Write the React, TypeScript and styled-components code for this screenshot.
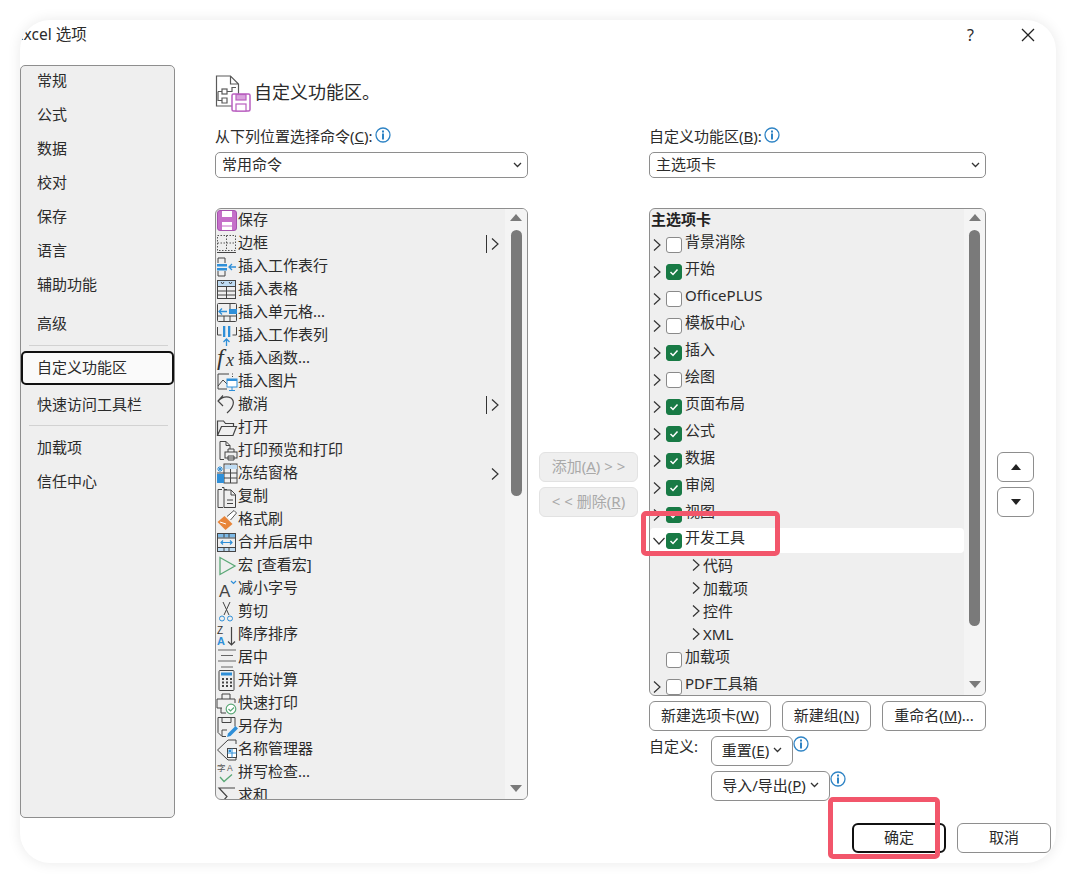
import React from "react";
import styled, { createGlobalStyle } from "styled-components";

const Global = createGlobalStyle`
  html, body { margin: 0; padding: 0; background: #fff; }
  body { font-family: "Noto Sans", "Noto Sans CJK SC", sans-serif; color: #2b2b2b; font-size: 15px; }
`;

const Dialog = styled.div`
  position: relative; width: 1036px; height: 843px; margin: 20px; background: #fff;
  border-radius: 30px; overflow: hidden; box-shadow: 0 0 14px rgba(0,0,0,.09);
  display: flex; flex-direction: column;
`;
const TitleBar = styled.div`
  height: 45px; flex: none; display: flex; align-items: flex-start; justify-content: space-between;
`;
const TitleText = styled.div`
  font-size: 15.5px; line-height: 28px; margin-left: -5px; white-space: nowrap;
`;
const TitleActions = styled.div`
  display: flex; align-items: flex-start; padding-right: 20px; gap: 46px;
`;
const HelpMark = styled.span`font-size: 16px; line-height: 30px;`;
const CloseBtn = styled.svg`width: 16px; height: 16px; margin-top: 7px; stroke: #222; stroke-width: 1.3; fill: none;`;

const Body = styled.div`display: flex; height: 753px; flex: none;`;
const Sidebar = styled.nav`
  width: 155px; flex: none; box-sizing: border-box; height: 753px; background: #efefef;
  border: 1px solid #8e8e8e; border-radius: 5px; overflow: hidden;
`;
const NavList = styled.div`display: flex; flex-direction: column; margin-top: -4px;`;
const NavItem = styled.div<{ $h?: number; $active?: boolean; $lift?: number }>`
  height: ${p => p.$h ?? 34}px; flex: none; box-sizing: border-box; padding-left: 16px; padding-bottom: ${p => p.$lift ?? 0}px;
  display: flex; align-items: center; white-space: nowrap;
  ${p => p.$active ? `height: 34px; border: 2px solid #111; border-radius: 5px; background: #fafafa; padding-left: 14px; padding-bottom: 4px;` : ""}
`;
const NavRule = styled.div`height: 1px; background: #d2d2d2; margin: 0 6px 0 8px; flex: none;`;

const Main = styled.div`flex: 1; padding-left: 40px; display: flex; flex-direction: column; min-width: 0;`;
const Header = styled.div`display: flex; align-items: center; gap: 3px; height: 36px; margin-top: 10px; flex: none;`;
const HeaderTitle = styled.div`font-size: 18px; margin-top: -4px;`;
const Columns = styled.div`display: flex; margin-top: 15px; align-items: flex-start;`;
const Column = styled.div<{ $w: number }>`width: ${p => p.$w}px; flex: none; display: flex; flex-direction: column;`;
const MidColumn = styled.div`width: 121px; flex: none; display: flex; flex-direction: column; align-items: center; padding-top: 326px; gap: 5px;`;
const SideColumn = styled.div`width: 37px; margin-left: 11px; flex: none; display: flex; flex-direction: column; padding-top: 326px; gap: 5px;`;
const LabelRow = styled.div`display: flex; align-items: center; height: 21px; gap: 2px; white-space: nowrap;`;
const LabelText = styled.span`margin-top: -2px;`;
const Select = styled.div`
  height: 26px; box-sizing: border-box; margin-top: 5px; border: 1px solid #8e8e8e; border-radius: 5px;
  display: flex; align-items: center; justify-content: space-between; padding: 0 5px 0 6px; background: #fff;
`;
const SelectText = styled.span`margin-top: -4px;`;
const ListBox = styled.div<{ $h: number }>`
  margin-top: 30px; height: ${p => p.$h}px; box-sizing: border-box; border: 1px solid #8e8e8e; border-radius: 6px;
  background: #efefef; display: flex; overflow: hidden;
`;
const ListContent = styled.div`flex: 1; min-width: 0; overflow: hidden;`;
const Track = styled.div<{ $w: number }>`
  width: ${p => p.$w}px; flex: none; background: #f4f4f4; display: flex; flex-direction: column; align-items: center;
`;
const ThumbArea = styled.div`flex: 1; align-self: stretch; display: flex; flex-direction: column; align-items: center;`;
const Thumb = styled.div<{ $h: number }>`width: 11px; height: ${p => p.$h}px; background: #7a7a7a; border-radius: 6px;`;
const Arrow = styled.svg`width: 12px; height: 21px; fill: #7a7a7a; flex: none;`;

const CmdRow = styled.div`
  height: 23px; display: flex; align-items: center; white-space: nowrap;
`;
const CmdLabel = styled.span`line-height: 20px; margin-top: -4px;`;
const CmdEnd = styled.span`margin-left: auto; margin-right: 6px; display: flex; align-items: center; gap: 4px;`;
const SubBar = styled.span`display: inline-block; width: 1px; height: 18px; background: #333;`;

const RootHead = styled.div`height: 22px; font-weight: 700; padding-left: 1px; line-height: 20px; color: #222;`;
const TabRow = styled.div<{ $sel?: boolean; $gap?: number }>`
  height: ${p => p.$sel ? 25 : 27}px; display: flex; align-items: center; padding-left: 3px; white-space: nowrap;
  margin-top: ${p => p.$gap ?? 0}px;
  ${p => p.$sel ? "background:#fff;border-radius:4px;" : ""}
`;
const TabChevronSlot = styled.span`width: 13px; flex: none; display: flex; align-items: center;`;
const Check = styled.span<{ $on: boolean }>`
  width: 16px; height: 16px; box-sizing: border-box; border-radius: 3px; flex: none; display: flex; align-items: center; justify-content: center;
  background: ${p => p.$on ? "#187a45" : "#fff"}; border: 1px solid ${p => p.$on ? "#187a45" : "#8a8a8a"};
`;
const TabLabel = styled.span`margin-left: 3px; line-height: 20px; margin-bottom: 7px;`;
const GroupRow = styled.div`height: 23px; display: flex; align-items: center; padding-left: 42px; gap: 3px; white-space: nowrap;`;

const Btn = styled.button<{ $w?: number; $off?: boolean; $strong?: boolean }>`
  width: ${p => p.$w}px; height: 30px; box-sizing: border-box; padding: 0 0 3px; flex: none;
  font: inherit; font-size: 15px; color: ${p => p.$off ? "#a9a9a9" : "#2b2b2b"};
  background: ${p => p.$off ? "#efefef" : "#fff"};
  border-style: solid; border-width: ${p => p.$strong ? 2 : 1}px;
  border-color: ${p => p.$strong ? "#111" : p.$off ? "#e2e2e2" : "#8e8e8e"};
  border-radius: 6px; display: flex; align-items: center; justify-content: center; gap: 4px; white-space: nowrap;
`;
const ButtonRow = styled.div`display: flex; justify-content: space-between; margin-top: 5px;`;
const CustomRow = styled.div`display: flex; margin-top: 5px;`;
const CustomLabel = styled.div`width: 62px; flex: none; line-height: 20px;`;
const CustomStack = styled.div`display: flex; flex-direction: column; gap: 5px;`;
const CustomLine = styled.div`display: flex; align-items: flex-start;`;
const Footer = styled.div`display: flex; justify-content: flex-end; gap: 11px; padding-right: 5px; margin-top: 5px;`;

const Info = styled.svg<{ $shift?: number }>`width: 16px; height: 16px; flex: none; margin-top: ${p => p.$shift ?? 0}px;`;

const Highlight = styled.div<{ $x: number; $y: number; $w: number; $h: number }>`
  position: absolute; left: ${p => p.$x}px; top: ${p => p.$y}px; width: ${p => p.$w}px; height: ${p => p.$h}px;
  box-sizing: border-box; border: 5px solid #f2566b; border-radius: 5px; pointer-events: none;
`;
const Ico = styled.svg`width: 22px; height: 22px; flex: none; overflow: visible; fill: none; stroke: #555; stroke-width: 1;`;
const BigIco = styled.svg`width: 36px; height: 37px; flex: none; fill: none; stroke: #5a5a5a; stroke-width: 1.2;`;
const ChevSvg = styled.svg`width: 8px; height: 12px; fill: none; stroke: #333; stroke-width: 1.2; flex: none;`;
const DownSvg = styled.svg`width: 12px; height: 8px; fill: none; stroke: #333; stroke-width: 1.2; flex: none;`;
const TinyDown = styled.svg`width: 9px; height: 6px; fill: none; stroke: #333; stroke-width: 1.3; flex: none;`;
const TriSvg = styled.svg`width: 10px; height: 6px; fill: #222; flex: none; margin-top: 3px;`;

const B = "#2f8fd8", P = "#c56fc9", G = "#5aa876", O = "#e8853a";

const ICONS: React.ReactNode[] = [
  <><rect x="1.5" y="0.5" width="19" height="20" rx="2.5" fill={P} stroke="#a652ae"/><rect x="6" y="1" width="10" height="6" fill="#fff" stroke="none"/><rect x="6" y="12" width="10" height="8" fill="#fff" stroke="none"/><path d="M6 16h10" stroke={P}/></>,
  <><path d="M1.5 2.5h18v15h-18zM10.5 2.5v15M1.5 10h18" strokeDasharray="1.5 1.5"/><path d="M1 19.5h19" stroke="#444"/></>,
  <><path d="M2 7V2h7v5M2 15v5h7v-5" stroke="#444"/><rect x="1" y="8" width="10" height="2.5" fill={B} stroke="none"/><rect x="1" y="12" width="10" height="2.5" fill={B} stroke="none"/><path d="M20 11h-7M16 8l-3 3 3 3" stroke={B} strokeWidth="1.3"/></>,
  <><rect x="1.5" y="1.5" width="18" height="18" stroke="#444"/><rect x="2" y="2" width="17" height="5" fill="#bfdcf3" stroke="none"/><path d="M1.5 7.5h18M1.5 12h18M1.5 16h18M10.5 7.5v12M5 3l1.5 2L8 3M13 3l1.5 2L16 3" stroke="#444"/></>,
  <><rect x="1.5" y="1.5" width="19" height="18" rx="1" stroke="#444"/><path d="M1.5 14h19M8 14v5.5M14 14v5.5M14 1.5v6" stroke="#444"/><rect x="13" y="7" width="8" height="5" fill={B} stroke="none"/><path d="M11 9.5H3M6 6.5l-3 3 3 3" stroke={B} strokeWidth="1.3"/></>,
  <><path d="M1.5 2v8h4M20.5 2v8h-4" stroke="#444"/><rect x="7" y="1" width="2.3" height="11" fill={B} stroke="none"/><rect x="12" y="1" width="2.3" height="11" fill={B} stroke="none"/><path d="M10.5 21v-7M7.5 17l3-3 3 3" stroke={B} strokeWidth="1.3"/></>,
  <><text x="1" y="17" fontFamily="Liberation Serif, serif" fontStyle="italic" fontSize="24" fill="#333" stroke="none">f</text><text x="10" y="18" fontFamily="Liberation Serif, serif" fontStyle="italic" fontSize="18" fill="#333" stroke="none">x</text></>,
  <><path d="M13 3H2v15h9M2 15l5-6 4 4" stroke="#444"/><rect x="11" y="8" width="10" height="8" fill="#fff" stroke={B}/><path d="M13 19.5h6M16 16v3.5" stroke={B}/><rect x="11" y="8" width="10" height="2" fill={B} stroke="none"/><path d="M16 3h1M16 5.5h1" stroke="#444"/></>,
  <><path d="M7 1.5L2 7l5 5M2 7c4-4 9-5 13-3 4 3 3 9-4 15" stroke="#444" strokeWidth="1.2"/></>,
  <><path d="M1.5 18.5V4h6l2 2.5h8v3M1.5 18.5l4-9h15l-3.5 9z" stroke="#444" strokeWidth="1.2"/></>,
  <><path d="M14 9V5.5L10 1.5H4v18h4" stroke="#444"/><path d="M10 1.5V5.5h4" stroke="#444"/><rect x="9" y="12" width="12" height="6" stroke="#444"/><path d="M12 12V9h6v3M12 16h6v4h-6z" stroke="#444"/></>,
  <><path d="M1 6h6M4 3v6M2 4l4 4M6 4L2 8" stroke={B}/><rect x="8" y="1" width="13" height="19" stroke="#444"/><path d="M1 10h20M14.5 1v19M8 15h13" stroke="#444"/><rect x="1" y="11" width="7" height="9" fill={B} stroke="none"/><rect x="9" y="2" width="12" height="4" fill="#bfdcf3" stroke="none"/></>,
  <><path d="M6 3.5H2v18h5M11 3.5H8V1.5h-2" stroke="#444"/><path d="M8 4h7l4.5 4.5V21.5H8zM15 4v5h4.5M11 14h6M11 17.5h6" stroke="#444"/></>,
  <><path d="M1.5 13l8 8 7-6-8-8z" fill={O} stroke="none"/><path d="M4 13l6 2" stroke="#fff"/><path d="M11 7.5l7-6 2.5 2.5-6 7" fill="#fff" stroke="#555"/></>,
  <><rect x="1.5" y="1.5" width="18" height="18" stroke="#444"/><rect x="2" y="2" width="17" height="3.5" fill="#7db9e6" stroke="none"/><rect x="2" y="16" width="17" height="3" fill="#bfdcf3" stroke="none"/><path d="M1.5 6h18M1.5 15.5h18M8 1.5v4M13 1.5v4M8 15.5v4M13 15.5v4" stroke="#444"/><path d="M5 10.5h11M7 8.5l-2 2 2 2M14 8.5l2 2-2 2" stroke={B} strokeWidth="1.2"/></>,
  <><path d="M4 2.5v17l15-8.5z" stroke={G} strokeWidth="1.3"/></>,
  <><text x="3" y="19" fontFamily="Liberation Sans, sans-serif" fontSize="17" fill="#444" stroke="none">A</text><path d="M15 3l2.5 2.5L20 3" stroke={B} strokeWidth="1.2"/></>,
  <><path d="M7 1l6 13M14 1L8 14" stroke="#444"/><circle cx="6" cy="17.5" r="2.5" stroke={B}/><circle cx="14" cy="17.5" r="2.5" stroke={B}/></>,
  <><text x="1" y="10" fontFamily="Liberation Sans, sans-serif" fontSize="10" fill="#333" stroke="none">Z</text><text x="1" y="21" fontFamily="Liberation Sans, sans-serif" fontSize="11" fontWeight="700" fill={B} stroke="none">A</text><path d="M15.5 3v18M12 17.5l3.5 3.5 3.5-3.5" stroke="#444" strokeWidth="1.2"/></>,
  <><path d="M2 3h18M5 8.5h12M2 14h18M5 20h12" stroke="#666" strokeWidth="1.2"/></>,
  <><rect x="3" y="0.5" width="15" height="20" rx="1" stroke="#444"/><rect x="5" y="2.5" width="11" height="3" fill={B} stroke="none"/><path d="M6 9h2M10 9h2M14 9h2M6 12.5h2M10 12.5h2M14 12.5h2M6 16h2M10 16h2M14 16h2" stroke="#444" strokeWidth="1.8"/></>,
  <><path d="M6 6V1h8v5M6 15H1V6h18v4M5 15v5h5" stroke="#444"/><circle cx="15" cy="16" r="4.8" fill="#fff" stroke={G} strokeWidth="1.2"/><path d="M12.5 16l2 2 3.5-3.5" stroke={G} strokeWidth="1.2"/></>,
  <><path d="M2 1.5h17v9M2 1.5v15l4 4h4M6 1.5v5h9v-5M6 20v-6h5" stroke="#444"/><path d="M11 21l1-3.5 7.5-7.5 2.5 2.5-7.5 7.5z" fill={B} stroke="none"/></>,
  <><path d="M20 5V1h-8L1.5 11 12 21h8V9" stroke="#444"/><rect x="11.5" y="9.5" width="9" height="9" fill="#fff" stroke="#444"/><path d="M11.5 14h9M16 9.5v9" stroke={B}/><rect x="12.5" y="10.5" width="2.5" height="2.5" fill={B} stroke="none"/></>,
  <><text x="1" y="9" fontFamily="Noto Sans CJK SC, sans-serif" fontSize="8.5" fill="#555" stroke="none">字</text><text x="11" y="8.5" fontFamily="Liberation Sans, sans-serif" fontSize="8.5" fill="#555" stroke="none">A</text><path d="M4 15l4 4.5 8-7" stroke={G} strokeWidth="1.3"/></>,
  <><path d="M19 3H3l8 8.5L3 20.5h16" stroke="#444" strokeWidth="1.2"/></>,
];

const commands: [string, ("bar" | "plain")?][] = [
  ["保存"], ["边框", "bar"], ["插入工作表行"], ["插入表格"], ["插入单元格..."], ["插入工作表列"], ["插入函数..."],
  ["插入图片"], ["撤消", "bar"], ["打开"], ["打印预览和打印"], ["冻结窗格", "plain"], ["复制"], ["格式刷"],
  ["合并后居中"], ["宏 [查看宏]"], ["减小字号"], ["剪切"], ["降序排序"], ["居中"], ["开始计算"], ["快速打印"],
  ["另存为"], ["名称管理器"], ["拼写检查..."], ["求和"],
];

const tabs: [string, boolean][] = [
  ["背景消除", false], ["开始", true], ["OfficePLUS", false], ["模板中心", false], ["插入", true], ["绘图", false],
  ["页面布局", true], ["公式", true], ["数据", true], ["审阅", true], ["视图", true],
];

const Chev = () => <ChevSvg viewBox="0 0 8 12"><path d="M1 0.5L7 6 1 11.5" /></ChevSvg>;
const Down = () => <DownSvg viewBox="0 0 12 8"><path d="M0.5 1L6 7l5.5-6" /></DownSvg>;
const SmallDown = () => <TinyDown viewBox="0 0 9 6"><path d="M1 1l3.5 3.5L8 1" /></TinyDown>;
const InfoIcon = ({ shift }: { shift?: number }) => (
  <Info $shift={shift} viewBox="0 0 16 16">
    <circle cx="8" cy="8" r="7" fill="#fff" stroke="#2f84c5" strokeWidth="1.3" />
    <rect x="7" y="3.5" width="2" height="2" fill="#2f84c5" />
    <rect x="7" y="6.5" width="2" height="6" fill="#2f84c5" />
  </Info>
);
const Tick = () => (
  <svg width="10" height="8" viewBox="0 0 10 8" fill="none" stroke="#fff" strokeWidth="1.5"><path d="M1.5 4l2.5 2.5 4.5-5" /></svg>
);
const Scroll = ({ w, thumb }: { w: number; thumb: number }) => (
  <Track $w={w}>
    <Arrow viewBox="0 0 12 21"><path d="M6 5l6 7H0z" /></Arrow>
    <ThumbArea><Thumb $h={thumb} /></ThumbArea>
    <Arrow viewBox="0 0 12 21"><path d="M0 7h12l-6 7z" /></Arrow>
  </Track>
);

export default function App() {
  return (
    <>
      <Global />
      <Dialog>
        <TitleBar>
          <TitleText>Excel 选项</TitleText>
          <TitleActions>
            <HelpMark>?</HelpMark>
            <CloseBtn viewBox="0 0 16 16"><path d="M2 2l12 12M14 2L2 14" /></CloseBtn>
          </TitleActions>
        </TitleBar>
        <Body>
          <Sidebar>
            <NavList>
              {["常规", "公式", "数据", "校对", "保存", "语言", "辅助功能"].map(t => <NavItem key={t}>{t}</NavItem>)}
              <NavItem $h={45}>高级</NavItem>
              <NavRule />
              <NavItem $h={5} />
              <NavItem $active>自定义功能区</NavItem>
              <NavItem $h={40} $lift={4}>快速访问工具栏</NavItem>
              <NavRule />
              <NavItem $h={3} />
              <NavItem>加载项</NavItem>
              <NavItem>信任中心</NavItem>
            </NavList>
          </Sidebar>
          <Main>
            <Header>
              <BigIco viewBox="0 0 36 37">
                <path d="M17 31H1.5V1h14l8 8v10M15.5 1v8h8" />
                <rect x="7" y="14" width="5" height="5" />
                <path d="M12 16.5h5v-4h4M3 16.5h4M3 16.5v9h4M7 23h5v5H7z" />
                <rect x="17" y="19" width="18" height="17" rx="1.5" stroke="#b95fc0" strokeWidth="1.5" fill="#fff" />
                <rect x="21" y="19.5" width="10" height="5.5" fill="#d9a3dd" stroke="#b95fc0" />
                <rect x="21" y="29" width="10" height="7" fill="#fff" stroke="#b95fc0" />
              </BigIco>
              <HeaderTitle>自定义功能区。</HeaderTitle>
            </Header>
            <Columns>
              <Column $w={313}>
                <LabelRow><LabelText>从下列位置选择命令(<u>C</u>):</LabelText><InfoIcon shift={-3} /></LabelRow>
                <Select><SelectText>常用命令</SelectText><SmallDown /></Select>
                <ListBox $h={592}>
                  <ListContent>
                    {commands.map(([label, end], i) => (
                      <CmdRow key={label}>
                        <Ico viewBox="0 0 22 22">{ICONS[i]}</Ico>
                        <CmdLabel>{label}</CmdLabel>
                        {end && <CmdEnd>{end === "bar" && <SubBar />}<Chev /></CmdEnd>}
                      </CmdRow>
                    ))}
                  </ListContent>
                  <Scroll w={22} thumb={266} />
                </ListBox>
              </Column>
              <MidColumn>
                <Btn $w={99} $off><span>添加(<u>A</u>) &gt; &gt;</span></Btn>
                <Btn $w={99} $off><span>&lt; &lt; 删除(<u>R</u>)</span></Btn>
              </MidColumn>
              <Column $w={337}>
                <LabelRow><LabelText>自定义功能区(<u>B</u>):</LabelText><InfoIcon shift={-3} /></LabelRow>
                <Select><SelectText>主选项卡</SelectText><SmallDown /></Select>
                <ListBox $h={488}>
                  <ListContent>
                    <RootHead>主选项卡</RootHead>
                    {tabs.map(([label, on]) => (
                      <TabRow key={label}>
                        <TabChevronSlot><Chev /></TabChevronSlot>
                        <Check $on={on}>{on && <Tick />}</Check>
                        <TabLabel>{label}</TabLabel>
                      </TabRow>
                    ))}
                    <TabRow $sel>
                      <TabChevronSlot><Down /></TabChevronSlot>
                      <Check $on><Tick /></Check>
                      <TabLabel>开发工具</TabLabel>
                    </TabRow>
                    {["代码", "加载项", "控件", "XML"].map(t => <GroupRow key={t}><Chev />{t}</GroupRow>)}
                    <TabRow $gap={1}>
                      <TabChevronSlot />
                      <Check $on={false} />
                      <TabLabel>加载项</TabLabel>
                    </TabRow>
                    <TabRow>
                      <TabChevronSlot><Chev /></TabChevronSlot>
                      <Check $on={false} />
                      <TabLabel>PDF工具箱</TabLabel>
                    </TabRow>
                  </ListContent>
                  <Scroll w={21} thumb={396} />
                </ListBox>
                <ButtonRow>
                  <Btn $w={122}><span>新建选项卡(<u>W</u>)</span></Btn>
                  <Btn $w={89}><span>新建组(<u>N</u>)</span></Btn>
                  <Btn $w={104}><span>重命名(<u>M</u>)...</span></Btn>
                </ButtonRow>
                <CustomRow>
                  <CustomLabel>自定义:</CustomLabel>
                  <CustomStack>
                    <CustomLine>
                      <Btn $w={82}><span>重置(<u>E</u>)</span><SmallDown /></Btn>
                      <InfoIcon />
                    </CustomLine>
                    <CustomLine>
                      <Btn $w={119}><span>导入/导出(<u>P</u>)</span><SmallDown /></Btn>
                      <InfoIcon />
                    </CustomLine>
                  </CustomStack>
                </CustomRow>
              </Column>
              <SideColumn>
                <Btn $w={37}><TriSvg viewBox="0 0 10 6"><path d="M5 0l5 6H0z" /></TriSvg></Btn>
                <Btn $w={37}><TriSvg viewBox="0 0 10 6"><path d="M0 0h10L5 6z" /></TriSvg></Btn>
              </SideColumn>
            </Columns>
          </Main>
        </Body>
        <Footer>
          <Btn $w={94} $strong>确定</Btn>
          <Btn $w={94}>取消</Btn>
        </Footer>
        <Highlight $x={621} $y={491} $w={139} $h={45} />
        <Highlight $x={808} $y={777} $w={112} $h={62} />
      </Dialog>
    </>
  );
}
